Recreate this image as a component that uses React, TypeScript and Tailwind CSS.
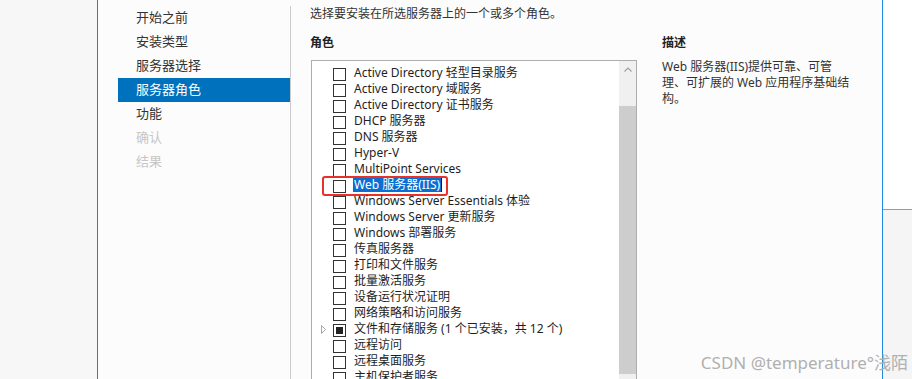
import React from "react";

interface RoleRow {
  label: string;
  selected?: boolean;
  expandable?: boolean;
  partial?: boolean;
}

const navItems: { label: string; state?: "active" | "disabled" }[] = [
  { label: "开始之前" },
  { label: "安装类型" },
  { label: "服务器选择" },
  { label: "服务器角色", state: "active" },
  { label: "功能" },
  { label: "确认", state: "disabled" },
  { label: "结果", state: "disabled" },
];

const roles: RoleRow[] = [
  { label: "Active Directory 轻型目录服务" },
  { label: "Active Directory 域服务" },
  { label: "Active Directory 证书服务" },
  { label: "DHCP 服务器" },
  { label: "DNS 服务器" },
  { label: "Hyper-V" },
  { label: "MultiPoint Services" },
  { label: "Web 服务器(IIS)", selected: true },
  { label: "Windows Server Essentials 体验" },
  { label: "Windows Server 更新服务" },
  { label: "Windows 部署服务" },
  { label: "传真服务器" },
  { label: "打印和文件服务" },
  { label: "批量激活服务" },
  { label: "设备运行状况证明" },
  { label: "网络策略和访问服务" },
  { label: "文件和存储服务 (1 个已安装，共 12 个)", expandable: true, partial: true },
  { label: "远程访问" },
  { label: "远程桌面服务" },
  { label: "主机保护者服务" },
];

function RoleItem({ role }: { role: RoleRow }) {
  return (
    <div className="relative flex h-4 items-center">
      <span className="ml-[9px] flex w-[12px] items-center">
        {role.expandable && (
          <svg width="5" height="9" viewBox="0 0 5 9">
            <path d="M0.5 0.5 L4.5 4.5 L0.5 8.5 Z" fill="none" stroke="#a6a6a6" strokeWidth="1" />
          </svg>
        )}
      </span>
      <span className="mt-[3px] flex h-[13px] w-[13px] shrink-0 items-center justify-center border border-[#333] bg-white">
        {role.partial && <span className="h-[7px] w-[7px] bg-[#222]" />}
      </span>
      {role.selected ? (
        <span className="ml-[7px] flex items-center">
          <span className="bg-[#0a6fd1] px-px leading-[14px] text-white">{role.label}</span>
          <span className="h-[14px] w-px bg-[#111]" />
        </span>
      ) : (
        <span className="ml-2 whitespace-nowrap">{role.label}</span>
      )}
      {role.selected && (
        <span className="absolute left-[10px] top-[-1px] h-[20px] w-[126px] rounded-[3px] border-2 border-[#e8312a]" />
      )}
    </div>
  );
}

export default function App() {
  return (
    <div className="relative flex h-[379px] w-[912px] overflow-hidden bg-white font-['Noto_Sans','Noto_Sans_CJK_SC',sans-serif] text-[#1e1e1e]">
      <div className="w-[97px] shrink-0 bg-[#f7f7f7]" />
      <div className="w-px shrink-0 bg-[#2b7ad0]" />

      <div className="flex w-[784px] shrink-0 bg-[#fcfcfc]">
        <nav className="w-[193px] shrink-0 pt-[6px]">
          <div className="h-full border-r border-[#cbcbcb] pl-[20px]">
            {navItems.map((item) => (
              <div
                key={item.label}
                className={`flex h-6 items-center pl-[18px] text-[13px] ${
                  item.state === "active"
                    ? "bg-[#0072bd] text-white"
                    : item.state === "disabled"
                      ? "text-[#c6c6c6]"
                      : "text-[#333]"
                }`}
              >
                {item.label}
              </div>
            ))}
          </div>
        </nav>

        <section className="flex-1 pl-[19px] pt-[6px] text-[12px]">
          <p className="leading-4 text-[#333]">选择要安装在所选服务器上的一个或多个角色。</p>

          <div className="mt-[13px] flex">
            <div className="w-[327px] shrink-0">
              <h2 className="font-bold leading-4 text-[#222]">角色</h2>
              <div className="ml-px mt-[9px] flex h-[330px] w-[326px] border border-[#adadad] bg-white">
                <div className="flex-1 pt-[4px]">
                  {roles.map((role) => (
                    <RoleItem key={role.label} role={role} />
                  ))}
                </div>
                <div className="flex w-[17px] flex-col bg-[#f0f0f0]">
                  <div className="flex h-[17px] items-center justify-center">
                    <svg width="8" height="5" viewBox="0 0 8 5">
                      <path d="M0.5 4.5 L4 1 L7.5 4.5" fill="none" stroke="#a0a0a0" strokeWidth="1.2" />
                    </svg>
                  </div>
                  <div className="h-[28px]" />
                  <div className="h-[268px] bg-[#cdcdcd]" />
                </div>
              </div>
            </div>

            <div className="ml-[25px]">
              <h2 className="font-bold leading-4 text-[#222]">描述</h2>
              <p className="mt-2 leading-4 text-[#333]">
                <span className="block">Web 服务器(IIS)提供可靠、可管</span>
                <span className="block">理、可扩展的 Web 应用程序基础结</span>
                <span className="block">构。</span>
              </p>
            </div>
          </div>
        </section>
      </div>

      <div className="w-px shrink-0 bg-[#1f8ae6]" />
      <div className="flex flex-1 flex-col">
        <div className="h-[209px] bg-white" />
        <div className="h-px bg-[#9a9a9a]" />
        <div className="flex-1 bg-[#f5f5f5]" />
      </div>

      <div className="absolute bottom-[6px] right-[4px] text-[17px] leading-5 text-[#b0b0b0]">
        CSDN @temperature°浅陌
      </div>
    </div>
  );
}
